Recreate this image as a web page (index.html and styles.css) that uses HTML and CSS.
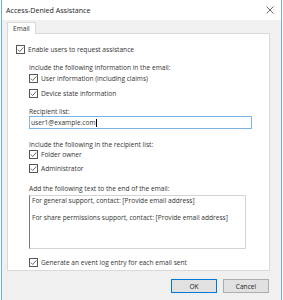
FILE: index.html
```html
<!DOCTYPE html>
<html>
<head>
<meta charset="utf-8">
<link rel="stylesheet" href="styles.css">
</head>
<body>
<div class="window">
  <div class="titlebar">
    <span class="title">Access-Denied Assistance</span>
    <svg class="close" width="8" height="8" viewBox="0 0 8 8"><path d="M0.5 0.5L7.5 7.5M7.5 0.5L0.5 7.5" stroke="#444" stroke-width="0.8" fill="none"/></svg>
  </div>
  <div class="client">
    <div class="tabs"><div class="tab">Email</div></div>
    <div class="panel">
      <label class="row cb-row top"><span class="cb"><svg viewBox="0 0 9 9" width="9" height="9"><path d="M1.8 4.6L3.7 6.5L7.3 2.4" stroke="#444" stroke-width="0.8" fill="none"/></svg></span>Enable users to request assistance</label>
      <div class="indent">
        <div class="row lbl m8">Include the following information in the email:</div>
        <label class="row cb-row m1"><span class="cb"><svg viewBox="0 0 9 9" width="9" height="9"><path d="M1.8 4.6L3.7 6.5L7.3 2.4" stroke="#444" stroke-width="0.8" fill="none"/></svg></span>User information (including claims)</label>
        <label class="row cb-row m5"><span class="cb"><svg viewBox="0 0 9 9" width="9" height="9"><path d="M1.8 4.6L3.7 6.5L7.3 2.4" stroke="#444" stroke-width="0.8" fill="none"/></svg></span>Device state information</label>
        <div class="row lbl m8">Recipient list:</div>
        <div class="input">user1@example.com<span class="caret"></span></div>
        <div class="row lbl m10">Include the following in the recipient list:</div>
        <label class="row cb-row"><span class="cb"><svg viewBox="0 0 9 9" width="9" height="9"><path d="M1.8 4.6L3.7 6.5L7.3 2.4" stroke="#444" stroke-width="0.8" fill="none"/></svg></span>Folder owner</label>
        <label class="row cb-row m4"><span class="cb"><svg viewBox="0 0 9 9" width="9" height="9"><path d="M1.8 4.6L3.7 6.5L7.3 2.4" stroke="#444" stroke-width="0.8" fill="none"/></svg></span>Administrator</label>
        <div class="row lbl m10">Add the following text to the end of the email:</div>
        <div class="textarea">For general support, contact: [Provide email address]

For share permissions support, contact: [Provide email address]</div>
        <label class="row cb-row m8"><span class="cb"><svg viewBox="0 0 9 9" width="9" height="9"><path d="M1.8 4.6L3.7 6.5L7.3 2.4" stroke="#444" stroke-width="0.8" fill="none"/></svg></span>Generate an event log entry for each email sent</label>
      </div>
    </div>
    <div class="buttons">
      <button class="btn default">OK</button>
      <button class="btn">Cancel</button>
    </div>
  </div>
</div>
</body>
</html>
```
FILE: styles.css
```css
* { box-sizing: border-box; }
html, body { margin: 0; padding: 0; background: #ffffff; }
body {
  font-family: "Segoe UI", "Open Sans", "Noto Sans", sans-serif;
  font-size: 6.6px;
  color: #333333;
  width: 283px;
  height: 300px;
  overflow: hidden;
}
.window {
  margin: 0 1px;
  width: 281px;
  height: 300px;
  border-left: 1px solid #6aafe8;
  border-right: 1px solid #6aafe8;
  display: flex;
  flex-direction: column;
}
.titlebar {
  height: 20px;
  background: #ffffff;
  display: flex;
  align-items: center;
  justify-content: space-between;
  padding: 0 7px 0 4px;
  flex-shrink: 0;
}
.title { font-size: 7.1px; color: #222; }
.close { display: block; }
.client {
  flex: 1;
  background: #f0f0f0;
  padding: 2px 0 0 5px;
}
.tabs { display: flex; height: 12px; position: relative; z-index: 1; }
.tab {
  width: 29px;
  height: 12px;
  background: #fff;
  border: 1px solid #d9d9d9;
  border-bottom: none;
  padding: 0 0 0 5px;
  line-height: 11px;
  font-size: 6.6px;
}
.panel {
  width: 263px;
  height: 238px;
  margin-top: -1px;
  background: #fff;
  border: 1px solid #d9d9d9;
  padding: 10px 0 0 8px;
}
.row {
  display: flex;
  align-items: center;
  height: 10px;
  white-space: nowrap;
}
.cb-row { gap: 3px; }
.cb {
  width: 9px;
  height: 9px;
  border: 1px solid #555;
  background: #fff;
  display: flex;
  align-items: center;
  justify-content: center;
  flex-shrink: 0;
}
.cb svg { display: block; margin: -1px; }
.indent { padding-left: 13px; display: flex; flex-direction: column; }
.m1 { margin-top: 1px; }
.m4 { margin-top: 4px; }
.m5 { margin-top: 5px; }
.m8 { margin-top: 8px; }
.m10 { margin-top: 10px; }
.input {
  width: 223px;
  height: 13px;
  border: 1px solid #7ab4e6;
  padding: 0 1px;
  line-height: 11px;
  display: flex;
  align-items: center;
}
.caret {
  display: inline-block;
  width: 1px;
  height: 8px;
  background: #000;
  margin-left: 0.5px;
}
.textarea {
  margin-top: 2px;
  width: 217px;
  height: 54px;
  border: 1px solid #d4d4d4;
  border-left-color: #7a7a7a;
  padding: 1px 2px;
  line-height: 8.5px;
  white-space: pre;
}
.buttons {
  display: flex;
  justify-content: flex-end;
  gap: 6px;
  padding: 8px 12px 0 0;
}
.btn {
  width: 46px;
  height: 14px;
  padding: 0;
  font-family: inherit;
  font-size: 6.6px;
  color: #222;
  background: #e1e1e1;
  border: 1px solid #adadad;
}
.btn.default { border-color: #0078d7; }
```
